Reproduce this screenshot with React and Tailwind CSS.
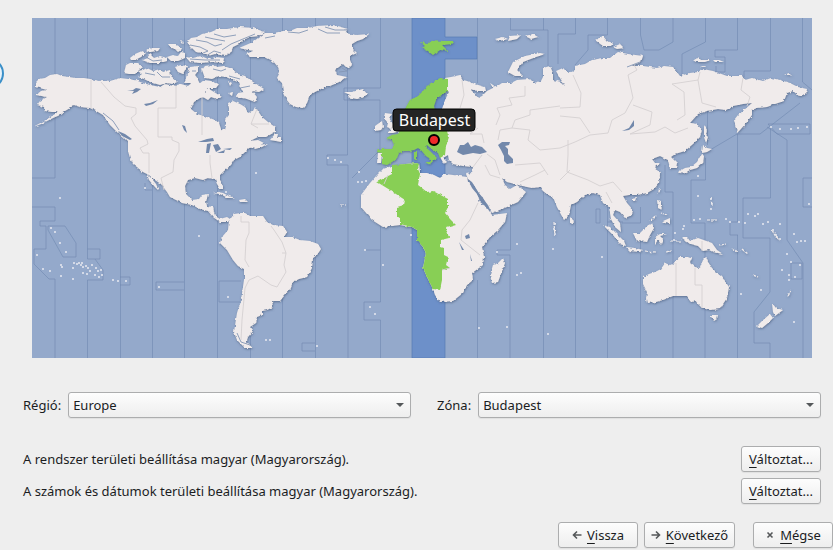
import React from "react";

const LAND = [
  // North America
  "M36 82L39 79L45 78L50 75L57 74L62 76L69 77L75 78L84 78L90 79L100 81L103 80L110 81L120 78L128 79L135 80L143 83L150 85L160 87L165 84L173 86L181 84L188 86L193 82L197 78L200 84L206 87L205 93L211 96L205 97L200 98L194 102L191 109L197 114L207 117L215 120L219 123L221 129L225 130L226 126L225 120L229 115L229 108L228 103L233 101L240 104L245 107L248 113L253 111L255 107L258 111L262 117L268 122L275 127L275 132L266 137L258 137L250 141L258 140L264 143L256 147L249 148L244 153L240 157L234 160L231 165L224 171L220 175L220 180L223 185L223 189L220 189L217 184L215 179L208 178L203 180L195 178L188 180L185 186L186 194L192 200L199 199L202 195L208 194L206 202L207 206L213 207L215 216L220 219L227 217L230 219L228 222L220 222L213 217L208 211L200 209L192 205L182 203L170 197L167 192L161 184L155 180L149 175L143 172L137 167L133 164L130 158L128 151L128 142L124 138L118 133L110 125L103 115L98 112L90 108L80 107L74 105L70 108L65 111L60 115L53 118L41 124L33 127L44 121L52 116L58 112L52 112L45 111L44 107L37 105L40 101L47 97L36 95L41 91L47 90L36 87Z",
  "M147 174L149 180L155 187L159 191L156 184L152 179Z",
  "M270 140L275 134L278 134L277 138L281 138L281 142L276 141Z",
  "M254 148L258 145L267 144L262 147L255 149Z",
  // Canadian Arctic
  "M124 73L126 65L130 63L138 63L143 67L139 70L135 74L129 74Z",
  "M138 71L143 70L147 68L153 71L160 69L163 72L170 70L171 76L178 82L174 84L166 83L160 85L150 82L144 79L138 77L142 74Z",
  "M130 58L135 54L142 51L146 53L141 57L135 60L131 60Z",
  "M142 60L147 58L150 54L154 58L160 56L167 58L167 61L160 63L150 63Z",
  "M146 50L152 48L160 48L158 51L150 52Z",
  "M168 44L175 44L182 48L181 50L171 48Z",
  "M167 57L173 55L178 56L181 52L185 53L185 58L178 61L171 61Z",
  "M175 67L181 65L187 66L185 70L183 74L178 72Z",
  "M190 67L198 66L198 71L195 75L198 79L198 86L190 83L184 83L187 78L188 73Z",
  "M186 57L193 58L201 56L208 59L216 57L224 58L223 63L212 62L200 63L190 62Z",
  "M187 42L191 38L197 37L202 34L211 32L218 29L227 29L240 27L253 28L265 32L259 36L250 37L243 40L239 44L233 47L231 52L225 56L215 54L208 56L203 53L196 52L192 48Z",
  "M202 70L205 66L212 65L217 67L224 66L232 69L238 74L245 76L250 80L258 85L264 89L259 92L252 91L257 97L255 102L247 99L237 97L238 93L244 92L239 87L240 83L233 80L226 77L219 76L212 79L205 78Z",
  "M205 88L209 89L214 92L222 97L217 99L211 97L208 100L203 97L206 92Z",
  "M199 84L204 80L211 81L219 84L216 88L208 88L204 91Z",
  "M180 41L184 42L182 44ZM175 49L181 50L178 52ZM228 93L233 92L232 96ZM228 81L232 83L230 86Z",
  // Greenland
  "M239 48L253 42L258 38L265 33L274 33L283 31L290 31L297 28L308 28L317 26L333 25L348 29L345 33L357 35L369 34L363 39L357 41L352 44L352 48L357 53L350 56L350 60L352 65L348 69L343 64L335 70L337 75L347 77L343 80L337 83L330 86L323 88L315 92L310 95L307 103L303 108L296 107L290 104L286 99L283 93L282 83L277 78L280 72L278 67L273 61L265 57L250 57L246 54L253 51Z",
  "M344 92L352 92L363 89L367 94L364 97L357 99L347 97L350 95Z",
  // British Isles
  "M385 113L392 114L389 118L393 124L397 128L400 131L393 133L387 133L392 129L387 127L388 123L384 118Z",
  "M375 126L382 121L383 127L381 130L375 131Z",
  // Eurasia
  "M445 78L451 77L460 75L463 80L467 81L475 84L485 87L486 91L477 91L470 89L475 94L478 98L482 96L487 91L493 88L490 83L496 87L502 83L511 83L517 80L530 79L534 83L541 81L543 77L543 68L550 66L553 73L553 80L561 82L565 86L560 78L556 71L563 68L568 73L575 70L575 66L585 64L592 60L603 58L610 58L618 52L628 54L643 56L641 62L631 66L643 66L657 68L664 66L673 67L680 76L690 73L698 72L703 69L713 71L727 76L742 76L745 80L752 78L763 81L771 78L780 80L790 83L798 87L807 89L806 94L799 96L793 91L787 93L784 101L775 104L767 107L757 108L752 110L752 115L747 122L740 130L737 133L734 120L738 115L743 111L752 103L743 104L733 106L726 110L718 109L707 111L698 114L690 123L697 124L702 130L700 137L693 144L685 151L675 154L671 157L677 163L676 168L670 168L668 160L660 156L652 159L655 163L660 163L655 167L660 174L659 183L654 189L647 193L637 195L629 195L623 196L627 203L633 210L632 215L625 218L620 212L615 210L613 215L620 223L621 232L615 227L611 219L609 207L603 203L600 195L593 193L585 195L577 202L571 205L569 215L564 220L557 207L553 197L548 195L543 191L540 187L532 188L522 186L515 184L507 182L502 178L505 185L510 189L517 185L526 192L518 202L507 207L492 213L488 205L480 195L472 182L468 179L466 174L472 173L473 167L463 166L453 164L449 160L448 155L443 158L447 162L444 164L440 157L444 153L448 137L443 128L442 109L445 100L449 92L445 88Z",
  "M378 153L382 153L381 163L377 163Z",
  // Africa
  "M383 169L392 166L405 164L419 163L420 173L427 173L434 175L440 178L445 174L453 175L467 177L468 182L477 193L480 202L487 208L492 215L500 214L507 213L505 222L498 230L490 237L482 247L484 257L483 265L472 273L473 280L467 285L463 293L453 301L440 302L435 295L433 289L428 279L423 268L426 253L423 247L417 240L417 230L412 227L400 225L383 227L372 220L367 214L361 207L361 195L370 183L377 175Z",
  "M503 258L505 263L502 271L498 282L492 283L490 275L493 265L498 263Z",
  // South America
  "M229 221L234 214L241 213L245 213L250 216L263 216L267 222L273 225L283 226L287 232L284 237L292 237L300 240L310 241L318 244L321 249L317 255L313 258L312 268L307 277L299 279L293 282L290 289L284 296L280 301L272 301L273 307L267 310L262 311L262 315L257 317L256 323L250 327L253 331L248 337L246 343L254 348L245 348L237 340L234 332L237 313L241 300L244 280L244 269L238 266L233 260L227 250L220 243L222 237L228 230Z",
  // Australia and Pacific neighbours
  "M643 277L649 274L655 272L661 269L665 263L670 265L675 263L679 257L687 257L692 258L690 263L695 267L700 268L703 260L706 257L708 262L712 268L717 273L722 277L729 287L727 298L723 304L720 309L710 310L702 308L698 304L695 300L692 302L687 296L673 296L663 300L656 302L647 303L646 299L647 292L643 284Z",
  "M710 315L718 315L717 319L714 321Z",
  "M772 303L776 308L783 310L775 316L773 312Z",
  "M770 314L773 318L768 323L762 328L757 326L762 321Z",
  "M681 237L687 237L690 241L698 238L712 243L717 250L723 254L713 252L709 250L703 251L698 246L690 244Z",
  "M633 233L640 233L647 226L652 223L654 228L650 235L647 242L637 241Z",
  "M603 225L610 227L617 234L624 241L626 246L620 244L613 235Z",
  "M626 247L635 248L643 250L640 252L630 251Z",
  "M655 237L660 234L667 234L660 236L663 239L661 244L658 240L655 244Z",
  "M657 200L661 201L661 206L662 210L658 208Z",
  "M663 221L670 218L670 224L666 223Z",
  "M570 217L574 221L572 224L570 222Z",
  "M632 199L636 198L635 201L632 201Z",
  "M659 188L661 190L658 194Z",
  // Japan, Sakhalin
  "M678 172L685 168L691 167L697 162L701 155L704 156L703 163L697 168L690 170L683 174Z",
  "M703 145L707 148L712 149L707 152L702 153Z",
  "M704 125L707 130L706 135L708 137L706 143L704 137Z",
  // Russian Arctic
  "M545 54L536 57L523 62L517 70L523 76L515 76L508 72L513 62L525 56L540 53Z",
  "M595 40L603 36L607 41L613 43L611 46L603 46Z",
  "M613 47L620 44L624 48L617 49Z",
  "M693 60L698 57L701 60L710 60L705 62L696 62Z",
  "M713 60L719 60L724 62L715 62Z",
  "M700 66L706 66L703 67Z",
  "M784 75L789 73L792 75Z",
  "M495 39L503 37L508 39L499 41Z",
  "M510 36L521 35L517 39L508 41Z",
  "M525 36L533 34L538 37L531 39Z",
  // Caribbean
  "M213 193L218 192L223 193L229 196L235 198L228 198L220 194Z",
  "M239 200L245 199L248 202L240 202Z",
];

const GREEN = [
  "M440 78L448 79L448 91L440 96L436 100L434 106L436 115L420 126L406 118L406 107L410 100L418 96L423 91L427 86L432 83Z",
  "M405 122L447 122L449 137L446 146L445 155L440 158L438 153L433 150L427 145L425 147L430 151L437 158L434 160L431 163L430 159L426 156L421 150L418 148L414 150L408 151L404 151L399 153L397 158L392 162L387 165L382 164L382 153L377 152L378 149L392 149L394 145L392 140L386 138L392 135L398 134Z",
  "M425 162L431 162L430 165Z",
  "M414 152L417 152L417 160L414 159Z",
  "M420 42L428 43L433 40L442 41L455 41L452 44L442 45L448 51L440 50L433 55L428 51L422 48L425 46Z",
  "M392 165L405 164L419 163L418 169L420 174L418 185L427 192L433 191L448 199L448 207L445 213L450 219L456 225L446 228L449 238L441 240L441 247L444 248L444 255L448 257L446 265L450 268L442 270L442 280L440 290L433 289L428 279L423 268L426 253L423 247L417 240L417 230L412 227L400 224L400 218L397 217L397 207L404 205L405 200L390 190L377 182L392 174Z",
];

const WATER = [
  "M457 152L460 145L464 145L468 142L471 147L475 145L482 147L487 152L480 154L473 153L463 155Z",
  "M498 145L502 142L510 142L509 145L505 146L508 149L508 154L513 159L513 163L507 164L504 161L504 156L501 150Z",
  "M207 139L213 138L214 141L206 142L198 142Z",
  "M207 144L211 143L209 153L206 153Z",
  "M213 145L218 144L221 149L216 152Z",
  "M217 153L225 150L224 153Z",
  "M223 149L232 148L230 150Z",
  "M127 90L133 90L136 88L141 89L137 92L132 94L134 91Z",
  "M144 104L150 103L158 100L153 104L146 106Z",
  "M182 125L185 126L187 133L184 130Z",
  "M622 131L629 128L634 120L634 126L629 130Z",
  "M465 236L469 234L470 238L466 239Z",
  "M459 242L464 250L462 250Z",
  "M470 254L472 261L471 261Z",
  "M118 131L125 134L132 139L130 140L122 136Z",
];

const INLETS =
  "M190 45L200 47L208 51L203 53M196 40L207 42L215 46L222 44M205 37L214 39L225 41M214 34L224 37L236 35M222 50L231 44L243 39L255 34M206 56L214 51L221 53M190 59L205 60L220 60M146 57L153 61L162 60M145 73L155 75M157 72L162 77L170 77M192 71L196 71M213 69L221 71L226 69M229 76L240 79M240 88L250 86M288 32L299 33L308 30M318 29L327 33L340 33M265 38L275 36M325 27L335 30L347 30M339 72L347 71L342 68M103 113L113 121L119 130M237 333L241 342L250 345M627 67L640 62";

const ZONES =
  "M55 18V178H32M32 207H55V221H40V226H46V249H34V264L49 279H55V358M48 226H65L76 243V257H63L48 230ZM87.500 18V249H100V259H87.500M87.500 249V259M95 259L103 270V280H87.500V358M120.500 18V358M120 277H130V285H120M152.500 18V358M184.500 18V358M184 282H156V290H184M145 183V190H152M217.500 18V358M250.500 18V358M241 281H219V302H240M282.500 18V358M315.500 18V358M315 343H302V351H315M347.500 18V155H327V165H348V358M380.500 18V88H344V100H380V150L352 178M380.500 220V250H364M380.500 250V302H364V320H380.500V358M477.500 18V83M477.500 280V358M510.500 18V30H548V66M543.500 18V30M510.500 208V250H497V255H510V358M543.500 190V358M575.500 18V34H558V64M575.500 200V358M607.500 18V35H588V50L575 65M607.500 205V358M607.500 222H623M596 209H600V223H596ZM640.500 18V35L644 50H659L673 42V18M640.500 207V223H622M640.500 235V358M665 165V192H673V358M705.500 18V42L682 54V76M707.500 111V145M705.500 158V180H691V223H705V358M737.500 18V50H715V57H725V72H716V66M737.500 235V358M737.500 134V222H730V235H738M770.500 18V71H744V77M800 103L760 134H737L710 150M770.500 127V198H743V238H770V292L754 312V343H770V358M767 127L787 140V240L803 263V358M802.500 18V82L812 90M768 124H810V134H777ZM812 178H803V207H812M791 263H802V279H791Z";

const BORDERS =
  "M91 80V108M101 82L108 90L114 97L125 106L136 108V114L131 118L135 126L147 140L148 144L140 148L143 153H149V173M176 85V108H158V137H172V140L179 143V151L174 160L173 172L161 178L164 190M202 98V135M210 155V163L212 178M257 109L251 124L258 128M251 124H269M241 216V222H249V233L246 240L245 260L249 267M249 280L245 288L242 320L241 340M249 280L258 276L271 285L277 287L286 272L284 265L286 253L282 242L274 230L271 226M286 253H282M462 80L464 95L460 108M478 128L470 134H482L484 143M496 125L500 115L497 108L512 105L509 98L525 96V86M498 140L500 130L512 128L515 120L530 115V110L560 106M512 128L530 130L528 140L540 150L560 148L575 142L590 135L608 133L612 120L625 113L633 98L628 75L637 70L634 65M560 108L580 107L581 93L573 75M560 116L580 118L590 133M633 105L652 112L650 125L630 134L655 132L665 127L675 133L688 128M677 120L685 115L684 92L672 84L698 80L700 72M698 80L702 103L716 107M743 78L741 90L750 97L747 106M568 140L568 155L567 172L588 180L600 186L613 182L622 192M487 154L495 160L500 175M473 167L482 155M485 165L490 175L500 178M515 165L540 163L548 175M520 182L535 175L545 170M570 170L560 180M676 263V296M695 268V285H702V308M702 241V251M606 192L612 203M478 203L470 220L462 230L461 240L480 255M388 175L384 184M442 270L450 268";

const DOTS = [
  [60, 198], [51, 228], [55, 232], [60, 243], [66, 252], [37, 255], [43, 269], [50, 271],
  [61, 265], [62, 267], [74, 263], [77, 264], [79, 263], [81, 265], [83, 267], [86, 266],
  [88, 268], [92, 265], [82, 263], [90, 271], [96, 268], [98, 271], [101, 270], [73, 268],
  [83, 273], [87, 274], [95, 275], [99, 277], [102, 275], [61, 276], [73, 279], [113, 280],
  [118, 281], [126, 281], [159, 287], [145, 188], [199, 236], [228, 297], [256, 173], [317, 346],
  [328, 158], [335, 160], [341, 162], [359, 172], [358, 182], [362, 182], [366, 181], [365, 250],
  [383, 265], [370, 307], [375, 314], [411, 235], [479, 328], [507, 327], [548, 334], [497, 252],
  [517, 244], [517, 275], [521, 273], [553, 249], [555, 224], [554, 229], [555, 234], [602, 257],
  [698, 196], [711, 199], [712, 204], [711, 209], [684, 226], [683, 229], [694, 220], [700, 219],
  [726, 219], [730, 222], [739, 222], [745, 223], [748, 214], [755, 216], [758, 214], [763, 224],
  [768, 222], [780, 224], [794, 234], [797, 242], [801, 241], [805, 241], [809, 204], [787, 254],
  [791, 262], [782, 270], [789, 275], [795, 277], [789, 280], [800, 265], [761, 290], [794, 322],
  [741, 294], [773, 230], [776, 235], [780, 239], [771, 127], [780, 129], [791, 129], [798, 128],
  [807, 127], [698, 176], [266, 340], [270, 340], [221, 187], [226, 192], [675, 233], [674, 240],
];

const STROKES =
  "M341 205L346 205M772 230L776 237L780 240M707 220L717 220M720 245L726 244M742 249L748 254M753 275L758 277M666 252L671 251M645 251L655 252M661 213L667 215M650 221L656 215M670 241L682 241M732 248L738 252M788 296L791 291M711 197L712 206M554 222L555 238";

function WorldMap() {
  return (
    <svg viewBox="32 18 780 340" className="block h-auto w-full" role="img" aria-label="Időzónatérkép">
      <defs>
        <filter id="coast" x="0" y="0" width="833" height="400" filterUnits="userSpaceOnUse">
          <feTurbulence type="fractalNoise" baseFrequency="0.28" numOctaves="2" seed="4" result="noise" />
          <feDisplacementMap in="SourceGraphic" in2="noise" scale="3" xChannelSelector="R" yChannelSelector="G" result="rough" />
          <feDropShadow in="rough" dx="0.500" dy="1" stdDeviation="1.200" floodColor="#3d5272" floodOpacity="0.650" />
        </filter>
      </defs>
      <rect x="32" y="18" width="780" height="340" fill="#94a9cb" />
      <path
        d="M412 18H445V37H477V59H445V177H420V163H412ZM412 225H445V358H412Z"
        fill="#6d90c9"
        stroke="#577bb3"
        strokeWidth="0.700"
      />
      <path d={ZONES} fill="none" stroke="#6f88b0" strokeWidth="0.800" opacity="0.750" />
      <g filter="url(#coast)">
        <path d={LAND.join("")} fill="#f0ebeb" />
        <path d={STROKES} fill="none" stroke="#f0ebeb" strokeWidth="1.200" strokeDasharray="3 1" />
        <path d={GREEN.join("")} fill="#88cf55" />
      </g>
      <path d={WATER.join("")} fill="#7288ab" />
      <path d="M468 179L473 184L478 192L483 198L486 203L491 211L487 208L481 202L477 194L472 188Z" fill="#7288ab" />
      <path d={INLETS} fill="none" stroke="#8396b4" strokeWidth="0.900" strokeLinejoin="round" />
      <path d={BORDERS} fill="none" stroke="#d5d0d1" strokeWidth="0.900" strokeLinejoin="round" />
      {DOTS.map(([x, y]) => (
        <circle key={`${x}-${y}`} cx={x} cy={y} r="1" fill="#e9eaf0" />
      ))}
    </svg>
  );
}

const BUTTON =
  "flex h-[26px] items-center justify-center rounded-[3px] border border-[#acadae] bg-linear-to-b from-[#fdfdfd] to-[#eeeeee] shadow-[0_1px_1px_rgba(0,0,0,0.06)]";

function Mnemonic({ text }) {
  return (
    <span>
      <span className="underline decoration-1 underline-offset-[3px]">{text[0]}</span>
      {text.slice(1)}
    </span>
  );
}

function Combo({ id, value }) {
  return (
    <div className="relative min-w-0 flex-1">
      <select
        id={id}
        defaultValue={value}
        className="block h-[26px] w-full appearance-none rounded-[3px] border border-[#acadae] bg-linear-to-b from-[#fdfdfd] to-[#eeeeee] px-1 shadow-[0_1px_1px_rgba(0,0,0,0.06)]"
      >
        <option>{value}</option>
      </select>
      <svg viewBox="0 0 8 4" className="pointer-events-none absolute top-[11px] right-[7px] h-1 w-2" aria-hidden="true">
        <path d="M0 0H8L4 4Z" fill="#55585a" />
      </svg>
    </div>
  );
}

function LocaleRow({ text }) {
  return (
    <div className="flex items-center justify-between">
      <p>{text}</p>
      <button type="button" className={`${BUTTON} w-20`}>
        <Mnemonic text="Változtat..." />
      </button>
    </div>
  );
}

function Icon({ d }) {
  return (
    <svg viewBox="0 0 10 10" className="size-[10px]" fill="none" stroke="#55585a" strokeWidth="1.600" aria-hidden="true">
      <path d={d} />
    </svg>
  );
}

export default function App() {
  return (
    <div className="relative min-h-screen overflow-hidden bg-[#eeeeee] font-['Noto_Sans',sans-serif] text-[13px] leading-5 text-[#1b1d1f]">
      <span className="absolute top-[58px] -left-[27px] size-[31px] rounded-full border-2 border-[#3a8fc8] bg-[#e6f2fa]" aria-hidden="true" />

      <main className="pt-[18px]">
        <div className="relative mr-[21px] ml-8">
          <WorldMap />
          <span className="absolute top-[30%] left-[51.6%] flex h-[23px] w-[83px] -translate-x-1/2 -translate-y-1/2 items-center justify-center rounded-[4px] border border-black bg-[#242424] pb-[2px] text-[16px] text-white">
            Budapest
          </span>
          <span
            className="absolute top-[36%] left-[51.6%] size-3 -translate-x-1/2 -translate-y-1/2 rounded-full border-2 border-black bg-[#ee2a2a]"
            aria-hidden="true"
          />
        </div>

        <div className="mt-[34px] mr-3 ml-[23px]">
          <div className="flex items-center gap-[7px]">
            <label htmlFor="region">Régió:</label>
            <Combo id="region" value="Europe" />
            <label htmlFor="zone" className="ml-[19px]">
              Zóna:
            </label>
            <Combo id="zone" value="Budapest" />
          </div>

          <div className="mt-7 flex flex-col gap-[6px]">
            <LocaleRow text="A rendszer területi beállítása magyar (Magyarország)." />
            <LocaleRow text="A számok és dátumok területi beállítása magyar (Magyarország)." />
          </div>
        </div>
      </main>

      <nav className="mt-[18px] flex justify-end">
        <button type="button" className={`${BUTTON} mr-[6px] w-20 gap-[5px]`}>
          <Icon d="M9.500 5H1.500M5 1.500L1.500 5L5 8.500" />
          <Mnemonic text="Vissza" />
        </button>
        <button type="button" className={`${BUTTON} mr-[18px] w-[91px] gap-[5px]`}>
          <Icon d="M0.500 5H8.500M5 1.500L8.500 5L5 8.500" />
          <Mnemonic text="Következő" />
        </button>
        <button type="button" className={`${BUTTON} w-20 gap-[5px]`}>
          <Icon d="M2.500 2.500L7.500 7.500M7.500 2.500L2.500 7.500" />
          <Mnemonic text="Mégse" />
        </button>
      </nav>
    </div>
  );
}
